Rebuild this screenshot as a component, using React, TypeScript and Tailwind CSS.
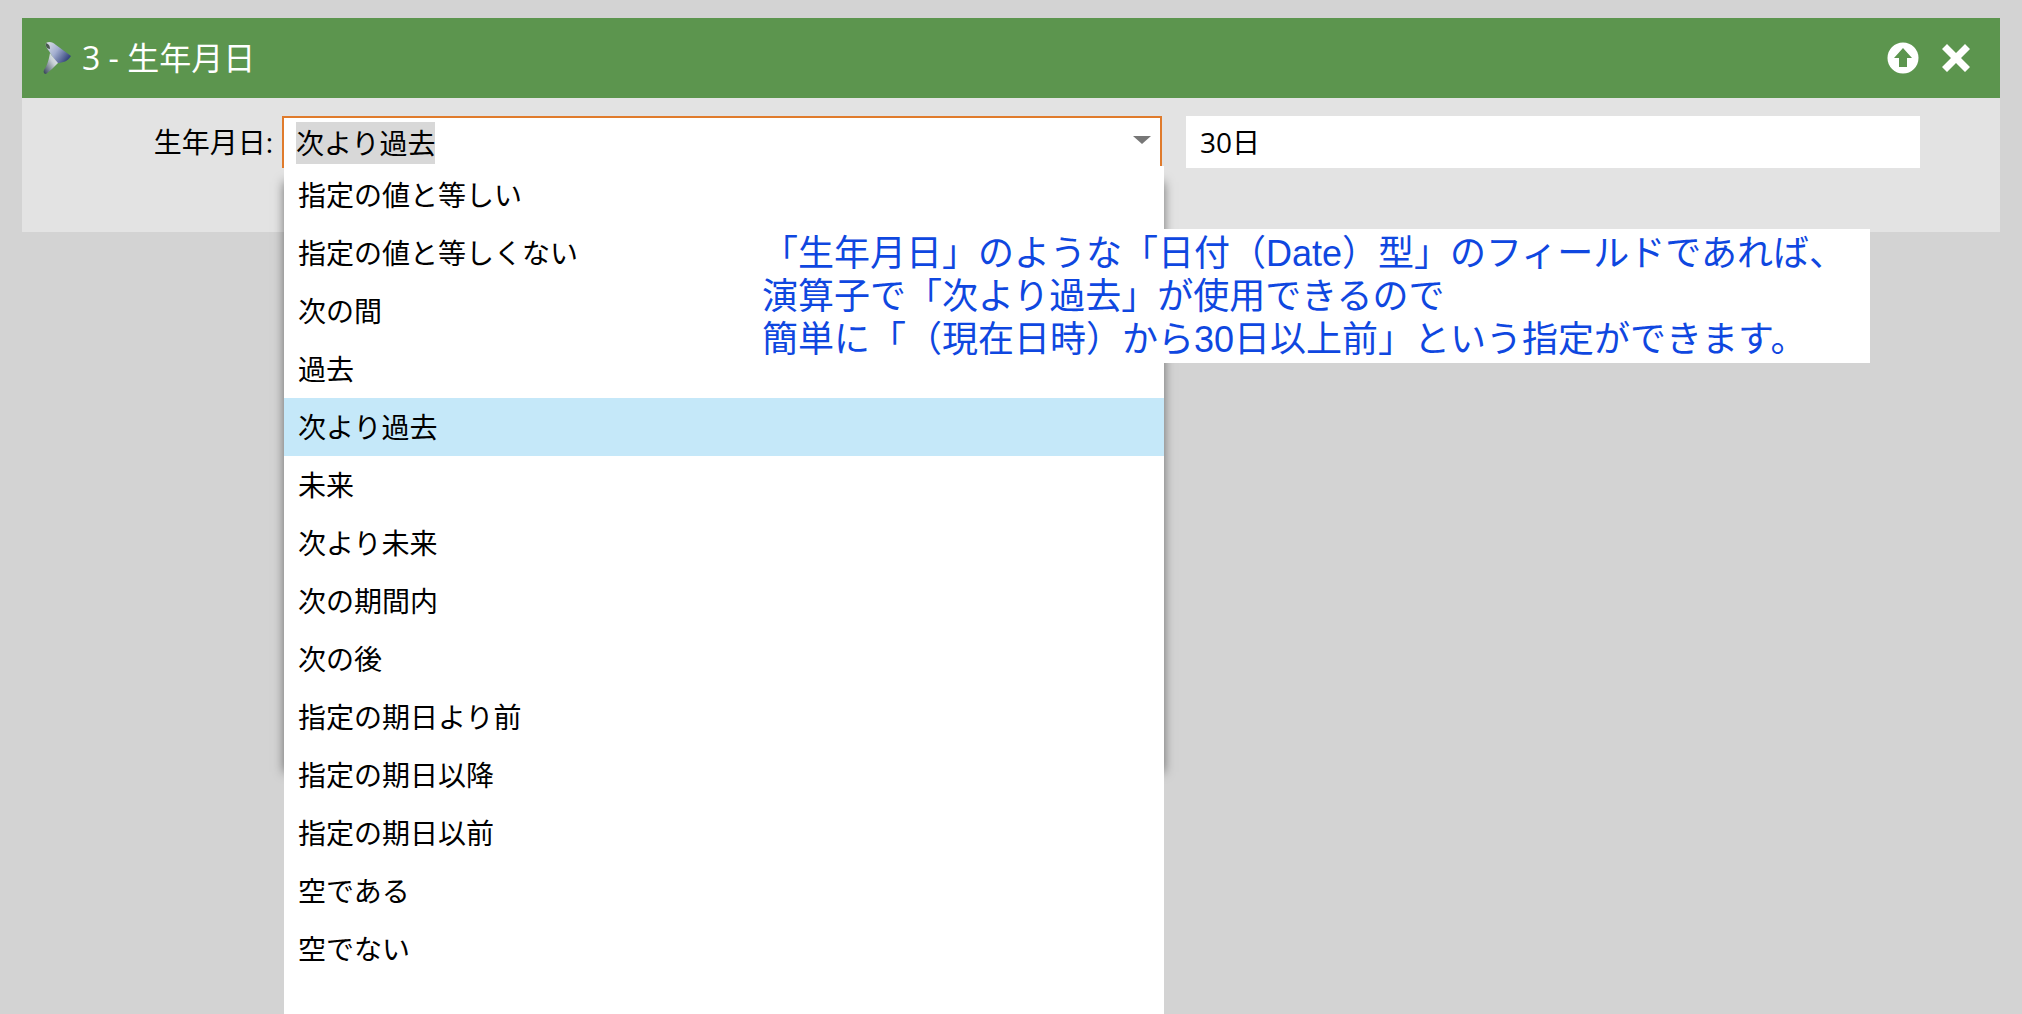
import React from "react";

const rows = [
  "指定の値と等しい",
  "指定の値と等しくない",
  "次の間",
  "過去",
  "次より過去",
  "未来",
  "次より未来",
  "次の期間内",
  "次の後",
  "指定の期日より前",
  "指定の期日以降",
  "指定の期日以前",
  "空である",
  "空でない",
];

function Funnel() {
  return (
    <svg width="30" height="34" viewBox="0 0 30 34" className="shrink-0">
      <defs>
        <linearGradient id="fg" x1="0" y1="0" x2="1" y2="0.6">
          <stop offset="0" stopColor="#dfe5e8" />
          <stop offset="0.5" stopColor="#a3aed0" />
          <stop offset="1" stopColor="#36467e" />
        </linearGradient>
        <linearGradient id="ft" x1="0" y1="1" x2="1" y2="0">
          <stop offset="0" stopColor="#2f3c52" />
          <stop offset="0.6" stopColor="#c8d0d6" />
          <stop offset="1" stopColor="#f0f3f5" />
        </linearGradient>
      </defs>
      <path d="M3 2 C6 0 10 1 13 4 L28 15 C25 20 20 22 14 22 C11 19 8 13 6 10 C4 7 2 5 3 2 Z" fill="url(#fg)" />
      <path d="M7 12 C9 15 12 19 15 22 C11 26 7 30 3 33 C1 33 0 31 1 29 C4 25 6 18 7 12 Z" fill="url(#ft)" />
      <path d="M3 2 C2 5 4 8 7 8 C7 5 6 3 3 2 Z" fill="#4a5a50" />
    </svg>
  );
}

export default function App() {
  return (
    <div className="relative h-[1014px] w-full overflow-hidden bg-[#d3d3d3] pt-[18px] font-['Open_Sans','Noto_Sans_CJK_JP',sans-serif] text-[28px] text-black">
      <div className="ml-[22px] w-[1978px]">
        <div className="flex h-[80px] items-center bg-[#5c954e] pl-[21px] pr-[29px] text-white">
          <Funnel />
          <span className="ml-[9px] text-[32px] leading-none">3 - 生年月日</span>
          <div className="ml-auto flex items-center gap-[22px]">
            <svg width="32" height="32" viewBox="0 0 32 32">
              <circle cx="16" cy="16" r="15.5" fill="#fff" />
              <path d="M16 6 L25 16 H20 V25 H12 V16 H7 Z" fill="#5c954e" />
            </svg>
            <svg width="30" height="30" viewBox="0 0 30 30">
              <path d="M6 1 L15 10 L24 1 L29 6 L20 15 L29 24 L24 29 L15 20 L6 29 L1 24 L10 15 L1 6 Z" fill="#fff" />
            </svg>
          </div>
        </div>
        <div className="flex h-[134px] items-start bg-[#e3e3e3] pt-[18px]">
          <label className="flex h-[52px] w-[251px] items-center justify-end leading-none">生年月日:</label>
          <div className="ml-[9px] flex h-[52px] w-[880px] items-center border-2 border-b-0 border-[#e07b2c] bg-white pl-[12px] pr-[9px]">
            <span className="flex h-[42px] items-center bg-[#d8d8d8] leading-none">次より過去</span>
            <svg width="18" height="8" viewBox="0 0 18 8" className="ml-auto -mt-[6px]">
              <path d="M0 0 H18 L9 8 Z" fill="#777" />
            </svg>
          </div>
          <div className="ml-[24px] flex h-[52px] w-[734px] items-center bg-white pl-[14px] leading-none">30日</div>
        </div>
      </div>

      <div className="absolute left-[284px] top-[182px] h-[590px] w-[880px] shadow-[0_0_10px_rgba(0,0,0,0.5)]" />
      <ul className="absolute bottom-0 left-[284px] top-[166px] w-[880px] bg-white">
        {rows.map((r) => (
          <li
            key={r}
            className={`flex h-[58px] items-center pl-[14px] leading-none ${r === "次より過去" ? "bg-[#c5e8f9]" : ""}`}
          >
            {r}
          </li>
        ))}
      </ul>

      <div className="absolute left-[752px] top-[229px] h-[134px] w-[1118px] whitespace-nowrap bg-white pl-[10px] pt-[3px] font-['Liberation_Sans','Noto_Sans_CJK_JP',sans-serif] text-[36px] leading-[43px] text-[#0f47e0] [text-spacing-trim:space-all]">
        <div>「生年月日」のような「日付（Date）型」のフィールドであれば、</div>
        <div>演算子で「次より過去」が使用できるので</div>
        <div>簡単に「（現在日時）から30日以上前」という指定ができます。</div>
      </div>
    </div>
  );
}
